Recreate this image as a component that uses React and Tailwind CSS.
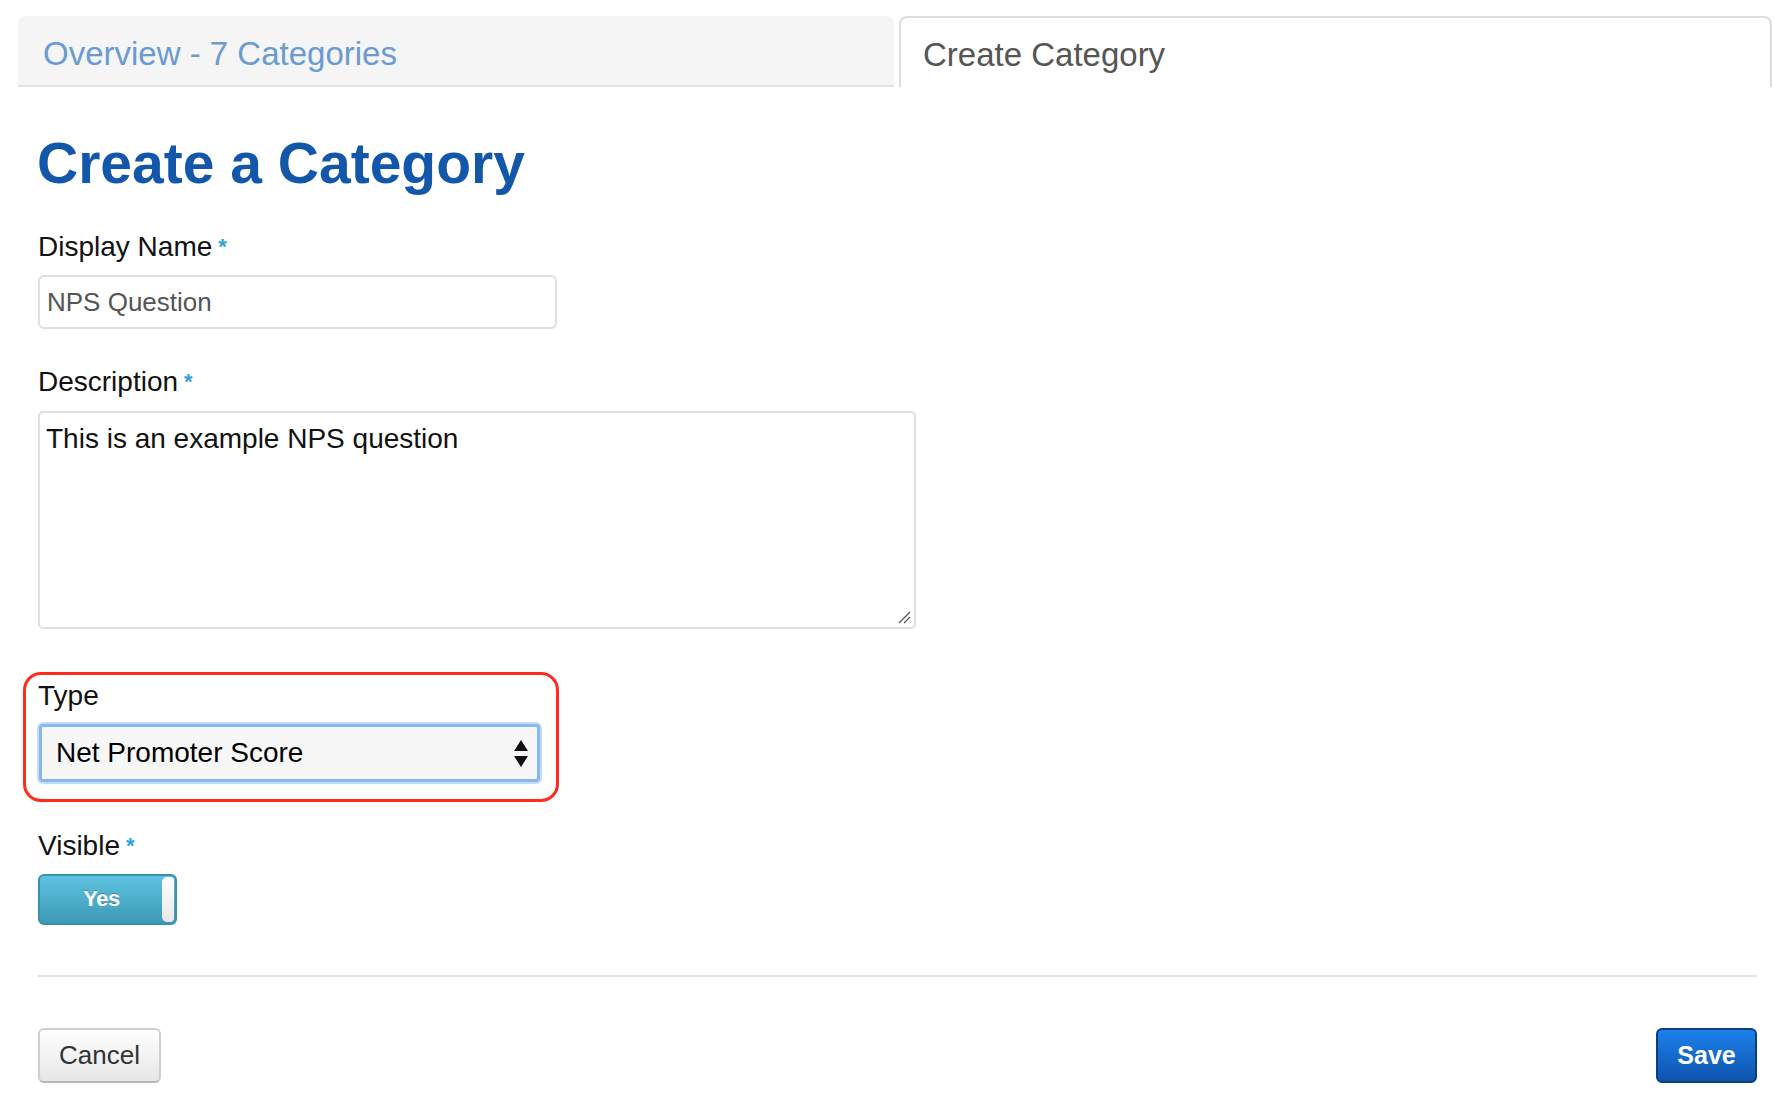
import React from 'react';

function Star() {
  return <span className="ml-[6px] align-top text-[22px] font-bold text-[#2ea3dc]">*</span>;
}

function Label({ children, required }) {
  return (
    <div className="text-[28px] leading-[32px] text-[#111]">
      {children}
      {required && <Star />}
    </div>
  );
}

export default function App() {
  return (
    <div className="min-h-screen w-full bg-white font-['Liberation_Sans',Arial,sans-serif]">
      {/* tabs */}
      <div className="flex gap-[5px] pl-[18px] pr-[2px] pt-[16px]">
        <div className="flex h-[71px] w-[876px] items-center rounded-t-[8px] border-b-2 border-[#e3e3e3] bg-[#f5f5f5] pl-[25px] pt-[6px]">
          <span className="text-[33px] text-[#6b9bd1]">Overview - 7 Categories</span>
        </div>
        <div className="flex h-[71px] flex-1 items-center rounded-t-[8px] border-2 border-b-0 border-[#dedede] bg-white pl-[22px] pt-[4px]">
          <span className="text-[33px] text-[#555]">Create Category</span>
        </div>
      </div>

      <div className="pl-[38px] pr-[17px]">
        <h1 className="-ml-[1px] mt-[48px] text-[57px] font-bold leading-[56px] text-[#1257aa]">Create a Category</h1>

        <div className="mt-[40px]">
          <Label required>Display Name</Label>
          <div className="mt-[12px] flex h-[54px] w-[519px] items-center rounded-[6px] border-2 border-[#e0e0e0] pl-[7px]">
            <span className="text-[26px] text-[#555]">NPS Question</span>
          </div>
        </div>

        <div className="mt-[37px]">
          <Label required>Description</Label>
          <div className="relative mt-[13px] h-[218px] w-[878px] rounded-[5px] border-2 border-[#e0e0e0] pl-[6px] pt-[10px]">
            <span className="text-[28px] leading-[32px] text-[#111]">This is an example NPS question</span>
            <svg className="absolute bottom-[3px] right-[3px]" width="14" height="14" viewBox="0 0 14 14">
              <path d="M2 13 L13 2 M7 13 L13 7" stroke="#555" strokeWidth="1.3" fill="none" />
            </svg>
          </div>
        </div>

        <div className="-ml-[15px] mt-[43px] w-[536px] rounded-[18px] border-[3px] border-[#ff2b1c] pb-[17px] pl-[12px] pt-[5px]">
          <Label>Type</Label>
          <div className="ml-[1px] mt-[12px] flex h-[58px] w-[501px] items-center justify-between rounded-[4px] border-[3px] border-[#86b8f0] bg-[#f7f7f7] pl-[14px] pr-[9px] shadow-[0_0_0_2px_#c4dcf8]">
            <span className="text-[28px] text-black">Net Promoter Score</span>
            <svg width="14" height="27" viewBox="0 0 14 27">
              <path d="M7 0 L14 11 L0 11 Z M0 16 L14 16 L7 27 Z" fill="#111" />
            </svg>
          </div>
        </div>

        <div className="mt-[28px]">
          <Label required>Visible</Label>
          <div className="mt-[12px] flex h-[51px] w-[139px] items-stretch rounded-[6px] border-2 border-[#3a91ab] bg-gradient-to-b from-[#5ec3e0] to-[#3d9ab6] p-[1px]">
            <div className="flex flex-1 items-start justify-center pt-[5px]">
              <span className="text-[22px] font-bold tracking-[-0.5px] text-white [text-shadow:0_-1px_0_rgba(0,0,0,0.25)]">Yes</span>
            </div>
            <div className="w-[12px] rounded-l-[5px] rounded-r-[4px] bg-gradient-to-b from-white to-[#e8e8e8]" />
          </div>
        </div>

        <div className="mt-[50px] h-[2px] w-full bg-[#e3e3e3]" />

        <div className="mt-[51px] flex justify-between pb-[21px]">
          <button className="flex h-[55px] w-[123px] items-center justify-center rounded-[6px] border-2 border-[#cfcfcf] border-b-[#b5b5b5] bg-gradient-to-b from-white to-[#e6e6e6] text-[26px] text-[#333]">
            Cancel
          </button>
          <button className="flex h-[55px] w-[101px] items-center justify-center rounded-[6px] border-2 border-[#0c3f80] bg-gradient-to-b from-[#1c80ec] to-[#0f55ad] text-[25px] font-bold text-white">
            Save
          </button>
        </div>
      </div>
    </div>
  );
}
